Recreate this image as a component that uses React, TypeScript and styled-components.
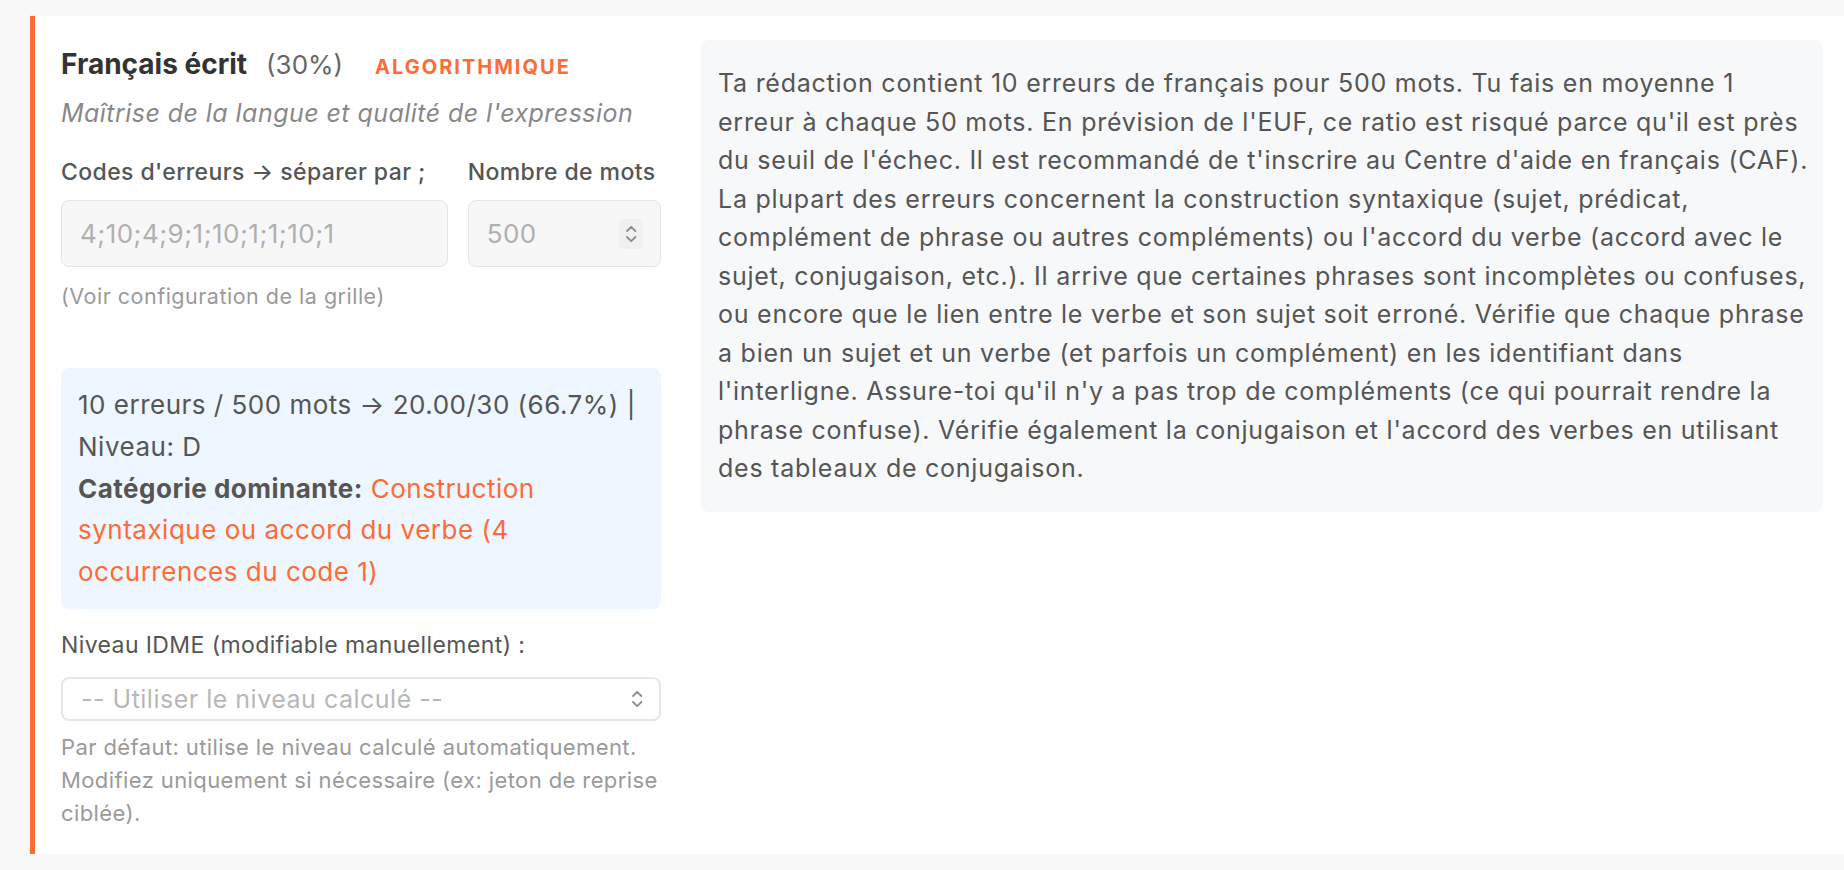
import React from "react";
import styled, { createGlobalStyle } from "styled-components";

const colors = {
  orange: "#ff6b35",
  page: "#f8f8f8",
  title: "#333333",
  text: "#555555",
  muted: "#888888",
  faint: "#9a9a9a",
  placeholder: "#b0b0b0",
  fieldBg: "#f7f7f7",
  fieldBorder: "#e4e4e4",
  infoBg: "#eef6ff",
  feedbackBg: "#f7f8fa",
};

const GlobalStyle = createGlobalStyle`
  html, body {
    margin: 0;
    padding: 0;
    background: ${colors.page};
  }
  body {
    font-family: Inter, "Noto Sans", sans-serif;
    overflow: hidden;
  }
`;

const ChevronsUpDown: React.FC<{ size?: number }> = ({ size = 20 }) => (
  <svg width={size * 0.6} height={size} viewBox="0 0 12 20" fill="none">
    <path d="M2.5 7.5 L6 4 L9.5 7.5" stroke="#8c8c8c" strokeWidth="1.5" strokeLinecap="round" strokeLinejoin="round" />
    <path d="M2.5 12.5 L6 16 L9.5 12.5" stroke="#8c8c8c" strokeWidth="1.5" strokeLinecap="round" strokeLinejoin="round" />
  </svg>
);

const feedback =
  "Ta rédaction contient 10 erreurs de français pour 500 mots. Tu fais en moyenne 1 erreur à chaque 50 mots. En prévision de l'EUF, ce ratio est risqué parce qu'il est près du seuil de l'échec. Il est recommandé de t'inscrire au Centre d'aide en français (CAF). La plupart des erreurs concernent la construction syntaxique (sujet, prédicat, complément de phrase ou autres compléments) ou l'accord du verbe (accord avec le sujet, conjugaison, etc.). Il arrive que certaines phrases sont incomplètes ou confuses, ou encore que le lien entre le verbe et son sujet soit erroné. Vérifie que chaque phrase a bien un sujet et un verbe (et parfois un complément) en les identifiant dans l'interligne. Assure-toi qu'il n'y a pas trop de compléments (ce qui pourrait rendre la phrase confuse). Vérifie également la conjugaison et l'accord des verbes en utilisant des tableaux de conjugaison.";

export default function App() {
  return (
    <>
      <GlobalStyle />
      <Page>
        <CriterionCard>
          <LeftColumn>
            <Header>
              <Title>Français écrit</Title>
              <Weight>(30%)</Weight>
              <Badge>Algorithmique</Badge>
            </Header>
            <Subtitle>Maîtrise de la langue et qualité de l'expression</Subtitle>

            <FieldsRow>
              <Field>
                <Label>Codes d'erreurs → séparer par ;</Label>
                <FieldBox>4;10;4;9;1;10;1;1;10;1</FieldBox>
              </Field>
              <Field>
                <Label>Nombre de mots</Label>
                <FieldBox>
                  500
                  <Spinner>
                    <ChevronsUpDown size={24} />
                  </Spinner>
                </FieldBox>
              </Field>
            </FieldsRow>
            <SmallHint>(Voir configuration de la grille)</SmallHint>

            <ResultBox>
              <div>10 erreurs / 500 mots → 20.00/30 (66.7%) | Niveau: D</div>
              <div>
                <strong>Catégorie dominante:</strong>{" "}
                <Highlight>Construction syntaxique ou accord du verbe (4 occurrences du code 1)</Highlight>
              </div>
            </ResultBox>

            <LevelLabel>Niveau IDME (modifiable manuellement) :</LevelLabel>
            <SelectBox>
              -- Utiliser le niveau calculé --
              <ChevronsUpDown size={24} />
            </SelectBox>
            <HelpText>
              Par défaut: utilise le niveau calculé automatiquement. Modifiez uniquement si
              nécessaire (ex: jeton de reprise ciblée).
            </HelpText>
          </LeftColumn>

          <FeedbackBox>{feedback}</FeedbackBox>
        </CriterionCard>
      </Page>
    </>
  );
}

const Page = styled.div`
  padding: 16px 0 0 30px;
`;

const CriterionCard = styled.section`
  background: #fff;
  border-left: 5px solid ${colors.orange};
  padding: 24px 21px 24px 26px;
  display: grid;
  grid-template-columns: 600px 1fr;
  column-gap: 40px;
  align-items: start;
`;

const LeftColumn = styled.div`
  display: flex;
  flex-direction: column;
`;

const Header = styled.div`
  display: flex;
  align-items: baseline;
  padding-top: 7px;
`;

const Title = styled.h3`
  margin: 0;
  font-size: 28px;
  line-height: 34px;
  font-weight: 700;
  color: ${colors.title};
`;

const Weight = styled.span`
  margin-left: 19px;
  font-size: 26px;
  color: #666;
`;

const Badge = styled.span`
  margin-left: 32px;
  font-size: 20px;
  font-weight: 700;
  letter-spacing: 2px;
  text-transform: uppercase;
  color: ${colors.orange};
`;

const Subtitle = styled.p`
  margin: 17px 0 0;
  font-size: 25px;
  line-height: 30px;
  letter-spacing: 0.45px;
  font-style: italic;
  color: ${colors.muted};
`;

const FieldsRow = styled.div`
  display: grid;
  grid-template-columns: 2fr 1fr;
  column-gap: 20px;
  margin-top: 30px;
`;

const Field = styled.div`
  display: flex;
  flex-direction: column;
`;

const Label = styled.label`
  margin-bottom: 14px;
  font-size: 23px;
  line-height: 28px;
  letter-spacing: 0.4px;
  font-weight: 500;
  white-space: nowrap;
  color: ${colors.text};
`;

const FieldBox = styled.div`
  box-sizing: border-box;
  height: 67px;
  display: flex;
  align-items: center;
  justify-content: space-between;
  padding: 0 18px;
  background: ${colors.fieldBg};
  border: 1.5px solid ${colors.fieldBorder};
  border-radius: 8px;
  font-size: 26px;
  letter-spacing: 0.5px;
  color: ${colors.placeholder};
`;

const Spinner = styled.span`
  display: flex;
  align-items: center;
  justify-content: center;
  width: 24px;
  height: 30px;
  margin-right: -1px;
  border-radius: 5px;
  background: #f0f0f0;
`;

const SmallHint = styled.div`
  margin-top: 16px;
  font-size: 21.5px;
  line-height: 26px;
  letter-spacing: 0.5px;
  color: ${colors.faint};
`;

const ResultBox = styled.div`
  margin-top: 59px;
  padding: 16px 20px 16px 17px;
  background: ${colors.infoBg};
  border-radius: 8px;
  font-size: 26px;
  line-height: 41.8px;
  letter-spacing: 0.5px;
  color: ${colors.text};

  strong {
    font-weight: 700;
  }
`;

const Highlight = styled.span`
  color: ${colors.orange};
`;

const LevelLabel = styled.label`
  margin-top: 22px;
  font-size: 23px;
  line-height: 28px;
  letter-spacing: 0.4px;
  color: ${colors.text};
`;

const SelectBox = styled.div`
  box-sizing: border-box;
  height: 44px;
  margin-top: 18px;
  display: flex;
  align-items: center;
  justify-content: space-between;
  padding: 0 15px 0 18px;
  border: 2px solid #e6e6e6;
  border-radius: 8px;
  background: #fff;
  font-size: 25px;
  letter-spacing: 0.5px;
  color: #b8b8b8;
`;

const HelpText = styled.p`
  margin: 10px 0 0;
  font-size: 22px;
  line-height: 33px;
  letter-spacing: 0.4px;
  color: ${colors.faint};
`;

const FeedbackBox = styled.div`
  padding: 24px 12px 24px 17px;
  background: ${colors.feedbackBg};
  border-radius: 8px;
  font-size: 25px;
  line-height: 38.5px;
  letter-spacing: 0.75px;
  color: ${colors.text};
`;
